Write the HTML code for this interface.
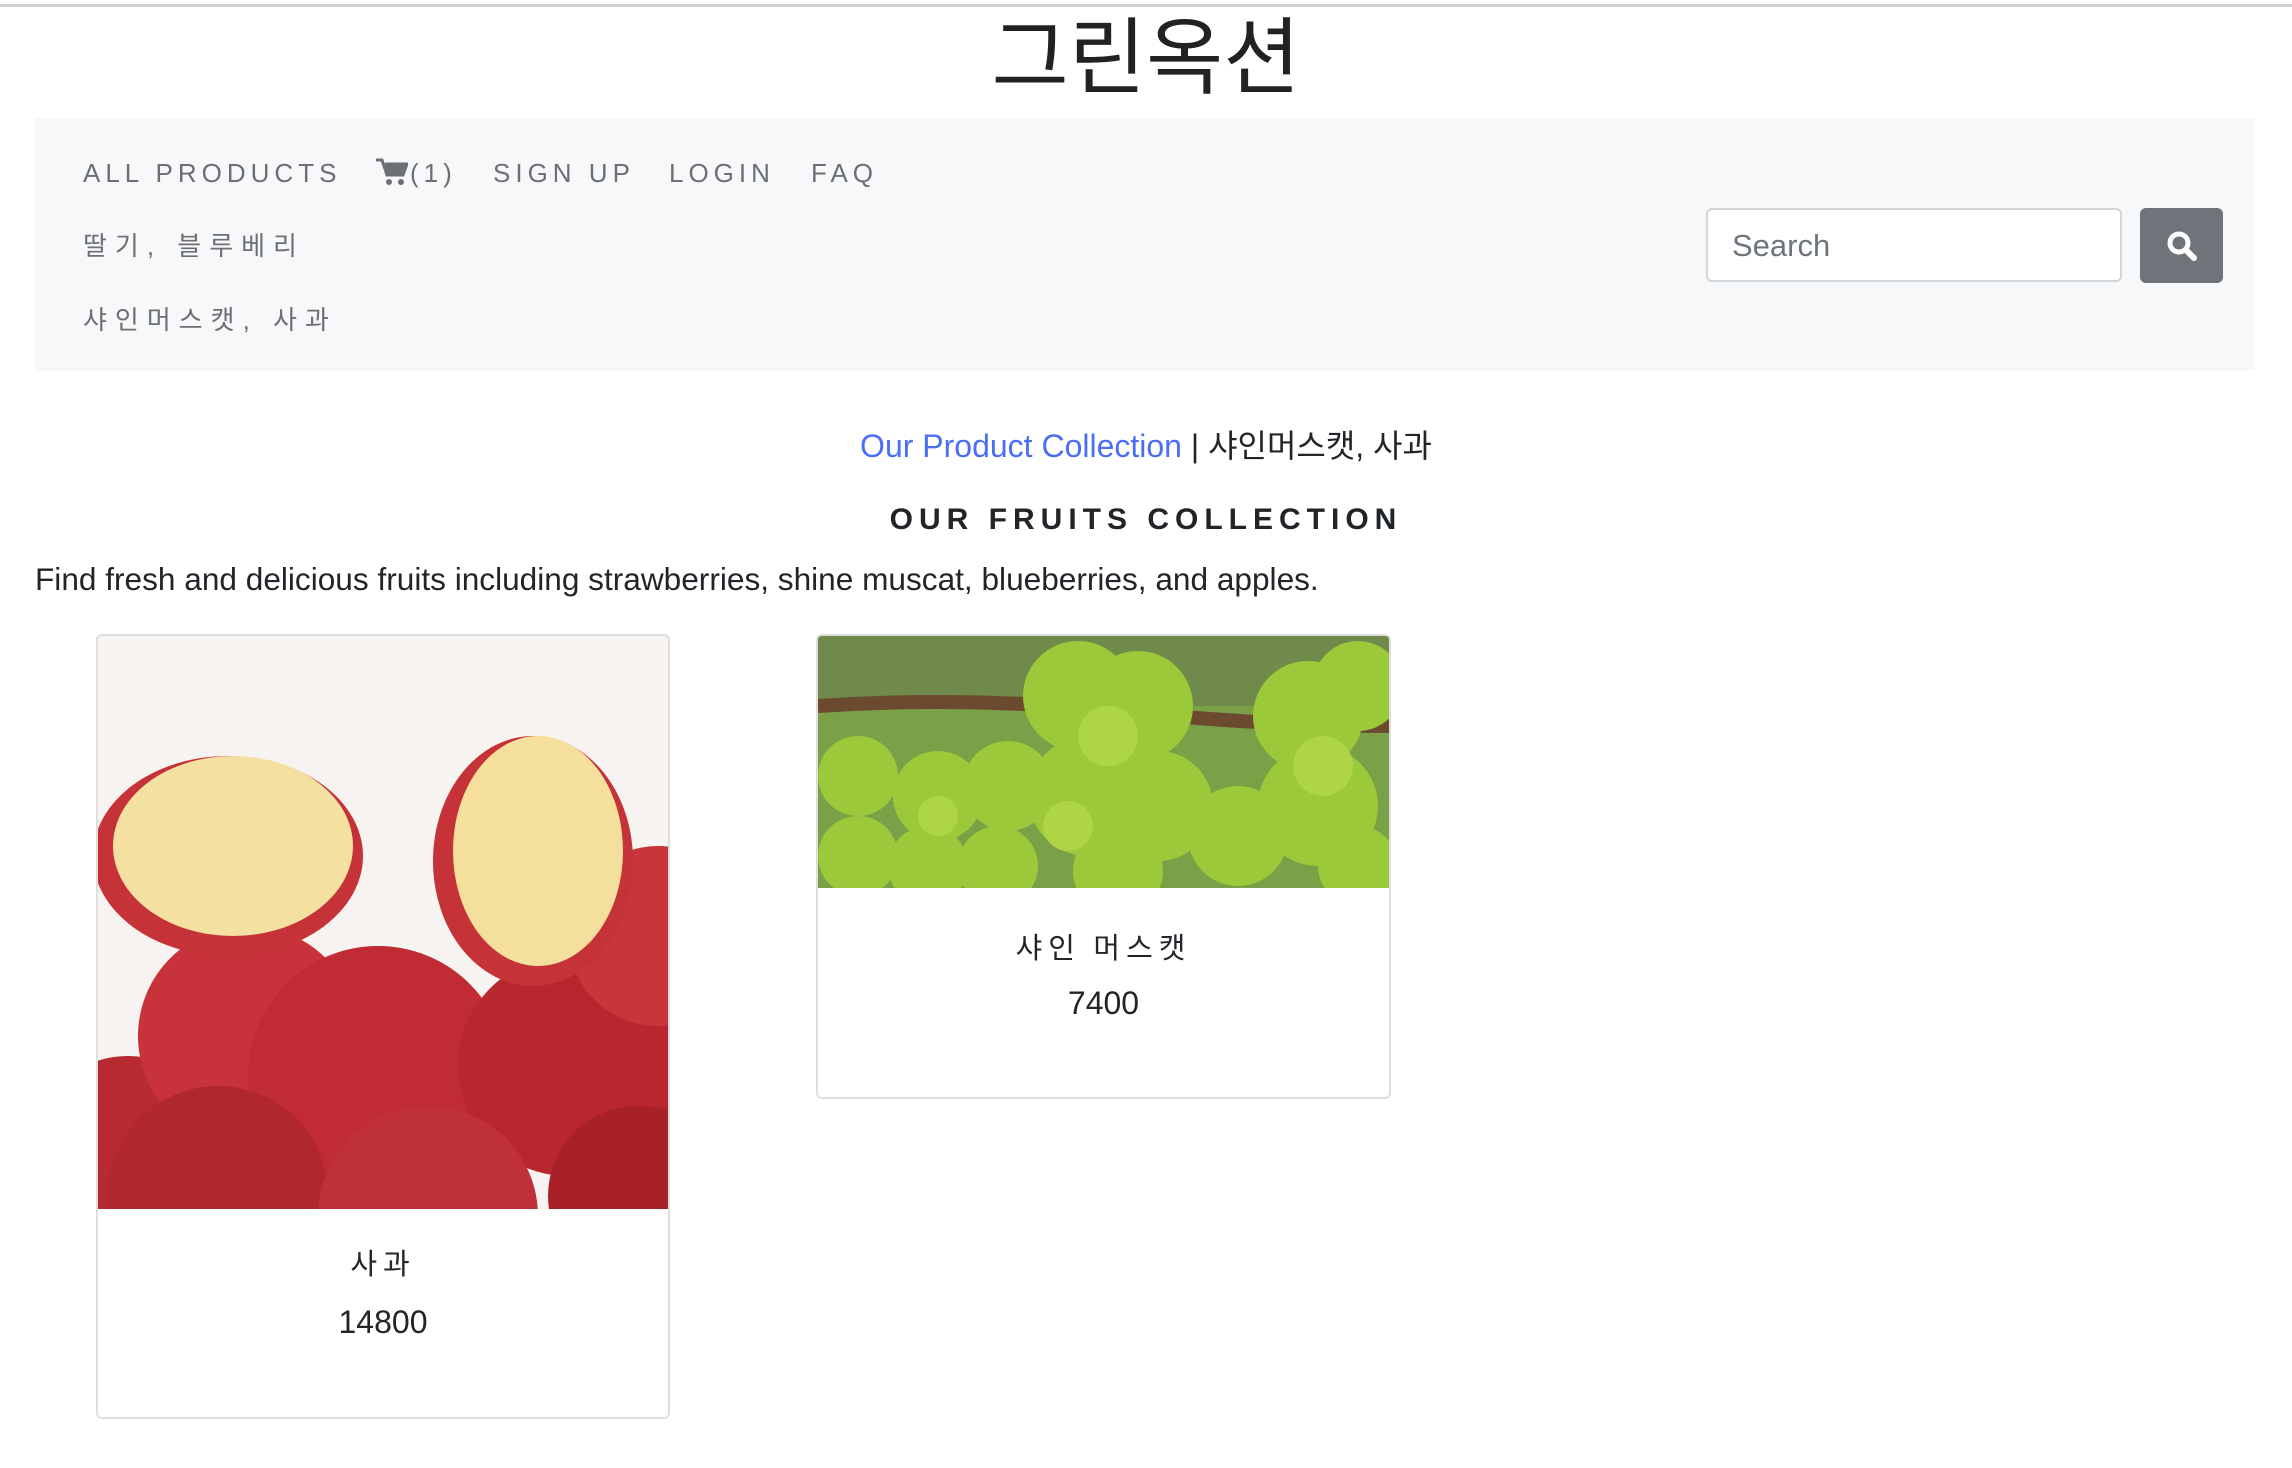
<!DOCTYPE html>
<html><head><meta charset="utf-8"><style>
*{margin:0;padding:0;box-sizing:border-box}
body{width:2292px;height:1468px;background:#fff;font-family:"Liberation Sans","Noto Sans CJK KR",sans-serif;color:#212529;position:relative;overflow:hidden}
.topline{position:absolute;left:0;top:4px;width:2292px;height:3px;background:#d0d0d0}
.title{position:absolute;left:0;width:2292px;top:2px;text-align:center;font-size:84px;line-height:100px;font-family:"Noto Sans CJK KR",sans-serif;font-weight:400;color:#222}
.nav{position:absolute;left:35px;top:118px;width:2220px;height:253px;background:#f7f8f9}
.ni{position:absolute;font-size:26px;letter-spacing:5px;color:#6c6f73;line-height:30px;font-family:"Liberation Sans","Noto Sans CJK KR",sans-serif}
.ko{letter-spacing:8px}
.search{position:absolute;left:1706px;top:208px;width:416px;height:74px;border:2px solid #d2d5d9;border-radius:6px;background:#fff;font-size:31px;color:#6c757d;padding:18px 24px;line-height:36px}
.btn{position:absolute;left:2140px;top:208px;width:83px;height:75px;background:#6f747b;border-radius:6px}
.bc{position:absolute;left:0;width:2292px;top:424px;text-align:center;font-size:32px;line-height:44px}
.bc a{color:#4a6ef5}
.h{position:absolute;left:0;width:2292px;top:500px;text-align:center;font-size:30px;font-weight:bold;letter-spacing:6px;line-height:40px}
.p{position:absolute;left:35px;top:558px;font-size:31.6px;line-height:42px}
.card{position:absolute;border:2px solid #dedede;border-radius:6px;overflow:hidden;background:#fff}
.cn{position:absolute;left:0;width:100%;text-align:center;font-size:29px;letter-spacing:6px;font-family:"Noto Sans CJK KR",sans-serif}
.cp{position:absolute;left:0;width:100%;text-align:center;font-size:32px}
</style></head><body>
<div class="topline"></div>
<div class="title">그린옥션</div>
<div class="nav"></div>
<div class="ni" style="left:83px;top:158px">ALL PRODUCTS</div>
<svg style="position:absolute;left:376px;top:158px" width="32" height="28" viewBox="0 0 32 28"><path d="M0 2h6l5 15h16l4-11H9" fill="none" stroke="#6c6f73" stroke-width="3"/><path d="M9 6h22l-4 11H12z" fill="#6c6f73"/><circle cx="13" cy="24" r="3" fill="#6c6f73"/><circle cx="25" cy="24" r="3" fill="#6c6f73"/></svg>
<div class="ni" style="left:410px;top:158px">(1)</div>
<div class="ni" style="left:493px;top:158px">SIGN UP</div>
<div class="ni" style="left:669px;top:158px">LOGIN</div>
<div class="ni" style="left:811px;top:158px">FAQ</div>
<div class="ni ko" style="left:83px;top:231px">딸기, 블루베리</div>
<div class="ni ko" style="left:83px;top:305px">샤인머스캣, 사과</div>
<div class="search">Search</div>
<div class="btn"><svg style="position:absolute;left:26px;top:22px" width="32" height="32" viewBox="0 0 32 32"><circle cx="13" cy="13" r="9" fill="none" stroke="#fff" stroke-width="5"/><path d="M20 20l8 8" stroke="#fff" stroke-width="6" stroke-linecap="round"/></svg></div>
<div class="bc"><a>Our Product Collection</a> | 샤인머스캣, 사과</div>
<div class="h">OUR FRUITS COLLECTION</div>
<div class="p">Find fresh and delicious fruits including strawberries, shine muscat, blueberries, and apples.</div>

<div class="card" style="left:96px;top:634px;width:574px;height:785px">
<svg width="574" height="573" viewBox="0 0 574 573" style="display:block">
<rect width="574" height="573" fill="#f6f3f0"/>
<circle cx="30" cy="520" r="100" fill="#b82a32"/>
<circle cx="150" cy="400" r="110" fill="#c8323a"/>
<circle cx="280" cy="440" r="130" fill="#c02b34"/>
<circle cx="470" cy="430" r="110" fill="#b8262e"/>
<circle cx="560" cy="300" r="90" fill="#c8363c"/>
<circle cx="120" cy="560" r="110" fill="#b02730"/>
<circle cx="330" cy="580" r="110" fill="#c0303a"/>
<circle cx="540" cy="560" r="90" fill="#a82028"/>
<ellipse cx="130" cy="220" rx="135" ry="100" fill="#c53238"/>
<ellipse cx="135" cy="210" rx="120" ry="90" fill="#f4e0a0"/>
<ellipse cx="435" cy="225" rx="100" ry="125" fill="#c53238"/>
<ellipse cx="440" cy="215" rx="85" ry="115" fill="#f4df9c"/>
</svg>
<div class="cn" style="top:605px">사과</div>
<div class="cp" style="top:668px">14800</div>
</div>

<div class="card" style="left:816px;top:634px;width:575px;height:465px">
<svg width="575" height="252" viewBox="0 0 575 252" style="display:block">
<rect width="575" height="252" fill="#7aa048"/>
<rect width="575" height="70" fill="#6f8a4a"/>
<path d="M0 70 Q150 60 300 75 T575 90" stroke="#6b4a30" stroke-width="14" fill="none"/>
<g fill="#9cc93a">
<circle cx="40" cy="140" r="40"/><circle cx="40" cy="220" r="40"/><circle cx="120" cy="160" r="45"/><circle cx="110" cy="230" r="40"/>
<circle cx="190" cy="150" r="45"/><circle cx="180" cy="230" r="40"/>
<circle cx="260" cy="60" r="55"/><circle cx="320" cy="70" r="55"/><circle cx="270" cy="160" r="60"/><circle cx="340" cy="170" r="55"/><circle cx="300" cy="235" r="45"/>
<circle cx="420" cy="200" r="50"/><circle cx="490" cy="80" r="55"/><circle cx="540" cy="50" r="45"/><circle cx="500" cy="170" r="60"/><circle cx="540" cy="230" r="40"/>
</g>
<g fill="#b2d84a" opacity="0.8"><circle cx="290" cy="100" r="30"/><circle cx="505" cy="130" r="30"/><circle cx="250" cy="190" r="25"/><circle cx="120" cy="180" r="20"/></g>
</svg>
<div class="cn" style="top:289px">샤인 머스캣</div>
<div class="cp" style="top:349px">7400</div>
</div>
</body></html>
